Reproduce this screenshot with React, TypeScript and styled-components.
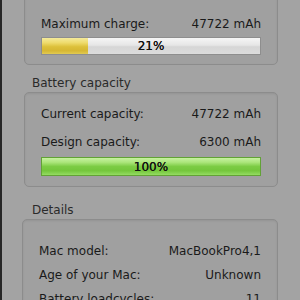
import styled, { createGlobalStyle } from 'styled-components'

const GlobalStyle = createGlobalStyle`
  html, body {
    margin: 0;
    padding: 0;
    background: #a3a3a3;
    font-family: "DejaVu Sans", "Liberation Sans", sans-serif;
    overflow: hidden;
  }
`

const Window = styled.div`
  display: flex;
  width: 300px;
  height: 300px;
  overflow: hidden;
`

const Strip = styled.div`
  width: 2px;
  flex-shrink: 0;
  background: #262626;
`

const Content = styled.div`
  flex: 1;
  display: flex;
  flex-direction: column;
  padding: 0 22px 0 22px;
`

const Group = styled.div<{ $top: number; $bottom: number; $shift?: number }>`
  margin-left: ${({ $shift }) => $shift ?? 0}px;
  padding: ${({ $top }) => $top}px 16px ${({ $bottom }) => $bottom}px;
  border: 1px solid #8c8c8c;
  border-radius: 5px;
  background: #a0a0a0;
  box-shadow: inset 0 1px 2px rgba(0, 0, 0, 0.08);
  flex-shrink: 0;
`

const FirstGroup = styled(Group)`
  margin-top: -20px;
`

const SectionLabel = styled.div<{ $top: number }>`
  margin: ${({ $top }) => $top}px 0 1px 8px;
  height: 16px;
  line-height: 16px;
  font-size: 12px;
  color: #2a2a2a;
`

const Row = styled.div<{ $h: number }>`
  display: flex;
  justify-content: space-between;
  align-items: center;
  height: ${({ $h }) => $h}px;
  font-size: 12px;
  color: #1a1a1a;
`

const Bar = styled.div<{ $h: number; $full?: boolean }>`
  position: relative;
  margin-top: 1px;
  height: ${({ $h }) => $h}px;
  box-sizing: border-box;
  border: 1px solid ${({ $full }) => ($full ? '#62a236' : '#8e8e8e')};
  background: linear-gradient(#f6f6f6 0%, #e6e6e6 45%, #d6d6d6 55%, #dcdcdc 100%);
  overflow: hidden;
`

const Fill = styled.div<{ $tone: 'yellow' | 'green' }>`
  height: 100%;
  background: ${({ $tone }) =>
    $tone === 'yellow'
      ? 'linear-gradient(#f4ea9a 0%, #eedb6c 30%, #dcc03a 55%, #d6b733 80%, #e2ca52 100%)'
      : 'linear-gradient(#c6f2a0 0%, #ace67c 25%, #7ccc44 50%, #74c63c 75%, #94dc62 100%)'};
`

const BarText = styled.span`
  position: absolute;
  inset: 0;
  display: flex;
  align-items: center;
  justify-content: center;
  font-size: 12px;
  color: #111;
  text-shadow: 0 0 0.4px #111;
`

function Meter({ value, height, tone }: { value: number; height: number; tone: 'yellow' | 'green' }) {
  return (
    <Bar $h={height} $full={value >= 100}>
      <Fill $tone={tone} style={{ width: `${value}%` }} />
      <BarText>{value}%</BarText>
    </Bar>
  )
}

export default function App() {
  return (
    <>
      <GlobalStyle />
      <Window>
        <Strip />
        <Content>
          <FirstGroup $top={31} $bottom={9}>
            <Row $h={24}>
              <span>Maximum charge:</span>
              <span>47722 mAh</span>
            </Row>
            <Meter value={21} height={18} tone="yellow" />
          </FirstGroup>

          <SectionLabel $top={10}>Battery capacity</SectionLabel>
          <Group $top={7} $bottom={10}>
            <Row $h={28}>
              <span>Current capacity:</span>
              <span>47722 mAh</span>
            </Row>
            <Row $h={28}>
              <span>Design capacity:</span>
              <span>6300 mAh</span>
            </Row>
            <Meter value={100} height={19} tone="green" />
          </Group>

          <SectionLabel $top={15}>Details</SectionLabel>
          <Group $top={19} $bottom={10} $shift={-2}>
            <Row $h={24}>
              <span>Mac model:</span>
              <span>MacBookPro4,1</span>
            </Row>
            <Row $h={24}>
              <span>Age of your Mac:</span>
              <span>Unknown</span>
            </Row>
            <Row $h={24}>
              <span>Battery loadcycles:</span>
              <span>11</span>
            </Row>
          </Group>
        </Content>
      </Window>
    </>
  )
}
